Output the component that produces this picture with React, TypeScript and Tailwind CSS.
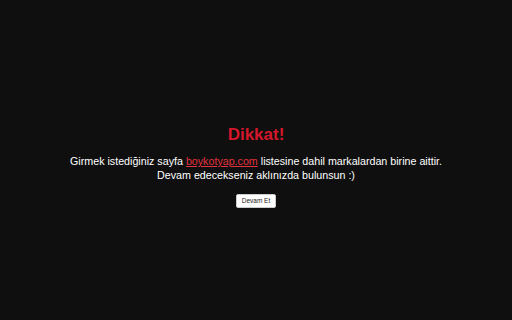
export default function App() {
  return (
    <div className="min-h-screen w-full bg-[#0f0f0f] flex flex-col items-center justify-center text-center font-['Liberation_Sans',Arial,sans-serif] pt-[14px]">
      <h1 className="text-[17px] font-bold text-[#d4172a] leading-none mb-[11px]">Dikkat!</h1>
      <p className="text-[10.7px] leading-[14px] text-white">
        Girmek istediğiniz sayfa{" "}
        <a href="#" className="text-[#e0333f] underline">boykotyap.com</a>{" "}
        listesine dahil markalardan birine aittir.
        <br />
        Devam edecekseniz aklınızda bulunsun :)
      </p>
      <button
        type="button"
        className="mt-[12px] bg-white text-[#222] text-[6.5px] leading-none px-[5px] py-[2.5px] rounded-[2px] border border-[#ccc]"
      >
        Devam Et
      </button>
    </div>
  );
}
